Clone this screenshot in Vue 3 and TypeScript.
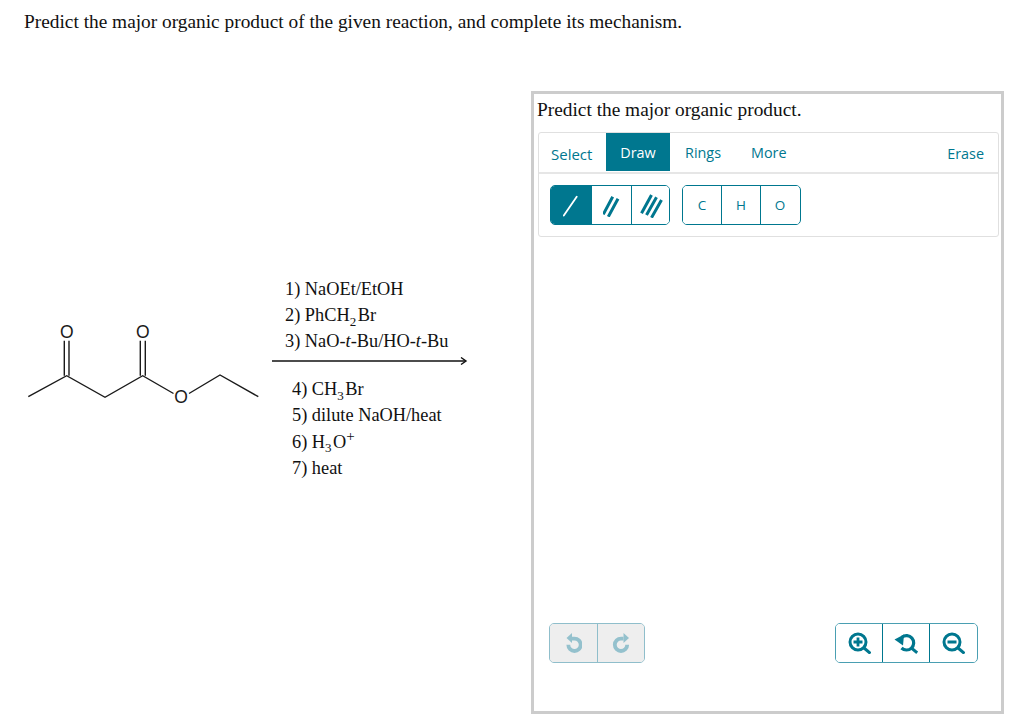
<script setup lang="ts">
const leftTabs = [
  { label: 'Select', cls: 'select' },
  { label: 'Draw', cls: 'draw' },
  { label: 'Rings', cls: 'rings' },
  { label: 'More', cls: 'more' },
]
const atoms = ['C', 'H', 'O']
</script>

<template>
  <div class="page">
    <h1 class="question">Predict the major organic product of the given reaction, and complete its mechanism.</h1>
    <div class="content">
      <section class="reaction">
        <svg class="molecule" width="250" height="110" viewBox="0 0 250 110">
          <g fill="none" stroke="#1a1a1a" stroke-width="1.4">
            <path d="M8.300 86.700 46.700 65.700 85 87.300 122.700 65.700 153.500 83.500" />
            <path d="M169 83.500 200 65 238.300 86.700" />
            <path d="M44.300 65.700V30.700M49 65.700V30.700M120.300 65.700V30.700M125.300 65.700V30.700" />
          </g>
          <g class="atom-label">
            <text x="46.700" y="27.500" text-anchor="middle">O</text>
            <text x="122.700" y="27.500" text-anchor="middle">O</text>
            <text x="161" y="92.500" text-anchor="middle">O</text>
          </g>
        </svg>
        <div class="conditions">
          <div class="above">
            <div>1) NaOEt/EtOH</div>
            <div>2) PhCH<sub>2</sub>Br</div>
            <div>3) NaO-<i>t</i>-Bu/HO-<i>t</i>-Bu</div>
          </div>
          <svg class="arrow" width="196" height="8" viewBox="0 0 196 8">
            <path d="M0 4H193" stroke="#111" stroke-width="1.500" fill="none" />
            <path d="M189 .5 194 4 189 7.500" stroke="#111" stroke-width="1.400" fill="none" />
          </svg>
          <div class="below">
            <div>4) CH<sub>3</sub>Br</div>
            <div>5) dilute NaOH/heat</div>
            <div>6) H<sub>3</sub>O<sup>+</sup></div>
            <div>7) heat</div>
          </div>
        </div>
      </section>

      <section class="panel">
        <h2 class="panel-title">Predict the major organic product.</h2>
        <div class="toolbar">
          <div class="tabs">
            <span v-for="tab in leftTabs" :key="tab.label" class="tab" :class="tab.cls">{{ tab.label }}</span>
            <span class="tab erase">Erase</span>
          </div>
          <div class="tools">
            <div class="btn-group bonds">
              <button class="tool active">
                <svg width="16" height="24" viewBox="0 0 16 24"><path d="M.8 22.500 13.700 3.700" stroke="#fff" stroke-width="1.800" stroke-linecap="round" /></svg>
              </button>
              <button class="tool">
                <svg width="18" height="24" viewBox="0 0 18 24"><path d="M.3 21.300 9.700 3.700M5.300 23.700 15 5.700" stroke="#00778f" stroke-width="3" /></svg>
              </button>
              <button class="tool">
                <svg width="24" height="26" viewBox="0 0 24 26"><path d="M1.500 21.300 11.500 3M6.500 23 16.500 5.300M11.500 25.700 21.500 8" stroke="#00778f" stroke-width="3" /></svg>
              </button>
            </div>
            <div class="btn-group atoms">
              <button v-for="a in atoms" :key="a" class="tool atom">{{ a }}</button>
            </div>
          </div>
        </div>
        <div class="footer">
          <div class="btn-group history">
            <button class="tool">
              <svg width="18" height="20" viewBox="0 0 18 20">
                <path d="M8 5.600H10.500A6.200 6.200 0 1 1 4.300 11.800" fill="none" stroke="#94c1cd" stroke-width="3.800" />
                <path d="M2.500 5 8 0V10Z" fill="#94c1cd" />
              </svg>
            </button>
            <button class="tool">
              <svg width="18" height="20" viewBox="0 0 18 20">
                <path d="M11.500 5.600H9A6.200 6.200 0 1 0 15.200 11.800" fill="none" stroke="#94c1cd" stroke-width="3.800" />
                <path d="M17 5 11.500 0V10Z" fill="#94c1cd" />
              </svg>
            </button>
          </div>
          <div class="btn-group zoom">
            <button class="tool">
              <svg width="24" height="22" viewBox="0 0 24 22">
                <circle cx="11" cy="10" r="8" fill="none" stroke="#00778f" stroke-width="3" />
                <path d="M16.500 15.500 23.500 21.500" stroke="#00778f" stroke-width="3" />
                <path d="M6.500 10H15.500M11 5.500V14.500" stroke="#00778f" stroke-width="2.800" />
              </svg>
            </button>
            <button class="tool">
              <svg width="24" height="22" viewBox="0 0 24 22">
                <path d="M8 5.200A7.200 7.200 0 1 1 7.500 16" fill="none" stroke="#00778f" stroke-width="3.200" />
                <path d="M.5 7.500 10 2.500 9 13.500Z" fill="#00778f" />
                <path d="M17.200 15.800 23.200 20.800" stroke="#00778f" stroke-width="3" />
              </svg>
            </button>
            <button class="tool">
              <svg width="24" height="22" viewBox="0 0 24 22">
                <circle cx="11" cy="10" r="8" fill="none" stroke="#00778f" stroke-width="3" />
                <path d="M16.500 15.500 23.500 21.500" stroke="#00778f" stroke-width="3" />
                <path d="M6.500 10H15.500" stroke="#00778f" stroke-width="2.800" />
              </svg>
            </button>
          </div>
        </div>
      </section>
    </div>
  </div>
</template>

<style>
html, body { margin: 0; background: #fff; }
</style>

<style scoped>
.page {
  width: 1024px;
  height: 715px;
  overflow: hidden;
  background: #fff;
  color: #111;
  font-family: "Liberation Serif", "Times New Roman", serif;
}
.question {
  margin: 0;
  height: 91px;
  box-sizing: border-box;
  padding: 11px 0 0 24px;
  font-size: 19.350px;
  line-height: 22px;
  font-weight: 400;
}
.content {
  display: flex;
}
.reaction {
  width: 531px;
  box-sizing: border-box;
  padding: 185px 0 0 20px;
  display: flex;
  align-items: flex-start;
}
.molecule {
  flex: none;
  margin-top: 34px;
}
.atom-label {
  font-family: "Liberation Sans", Arial, sans-serif;
  font-size: 17.500px;
  fill: #1a1a1a;
}
.conditions {
  margin-left: 2px;
  width: 196px;
  font-size: 18.330px;
  line-height: 26px;
}
.above { padding-left: 13px; }
.below { padding-left: 20px; margin-top: 11px; line-height: 26.400px; }
.arrow { display: block; margin-top: 3px; }
.conditions sub,
.conditions sup {
  font-size: 13px;
  line-height: 0;
  margin-right: 1.500px;
}
.conditions sup { font-size: 15px; margin-right: 0; }
.panel {
  width: 473px;
  height: 623px;
  box-sizing: border-box;
  border: 3px solid #ccc;
  display: flex;
  flex-direction: column;
}
.panel-title {
  margin: 0;
  padding: 4px 0 0 3px;
  font-size: 19.350px;
  line-height: 23px;
  font-weight: 400;
}
.toolbar {
  margin: 11px 0 0 4px;
  width: 461px;
  box-sizing: border-box;
  border: 1px solid #e0e0e0;
  border-radius: 3px;
  font-family: "Open Sans", "Noto Sans", sans-serif;
  color: #00778f;
}
.tabs {
  display: flex;
  height: 41px;
  box-sizing: border-box;
  border-bottom: 2px solid #e6e6e6;
  font-size: 14.400px;
}
.tab {
  display: flex;
  align-items: center;
  height: 38px;
}
.select { margin-left: 12px; width: 42px; padding-top: 3px; box-sizing: border-box; font-size: 15px; }
.draw {
  margin-left: 13px;
  width: 64px;
  justify-content: center;
  background: #00778f;
  color: #fff;
}
.rings { margin-left: 15px; }
.more { margin-left: 30px; }
.erase { margin-left: auto; margin-right: 14px; padding-top: 2px; box-sizing: border-box; }
.tools {
  height: 62px;
  box-sizing: border-box;
  padding: 11px 0 0 11px;
  display: flex;
  gap: 12px;
}
.btn-group {
  display: flex;
  height: 40px;
  box-sizing: border-box;
  border: 1px solid #00778f;
  border-radius: 5px;
  overflow: hidden;
}
.tool {
  display: flex;
  align-items: center;
  justify-content: center;
  padding: 0;
  margin: 0;
  border: 0;
  border-left: 1px solid #00778f;
  background: #fff;
  color: #00778f;
  height: 100%;
}
.tool:first-child { border-left: 0; }
.bonds { width: 120px; }
.bonds .tool { width: 40px; flex: none; }
.active { background: #00778f; }
.atoms { width: 119px; }
.atom {
  width: 39px;
  flex: none;
  font-family: "Open Sans", "Noto Sans", sans-serif;
  font-size: 13.500px;
}
.atom:first-child { width: 38px; }
.footer {
  margin-top: auto;
  margin-bottom: 48px;
  padding: 0 23px 0 15px;
  display: flex;
  justify-content: space-between;
}
.history {
  width: 96px;
  border-color: #8fbecb;
  background: #eee;
}
.history .tool {
  flex: 1;
  background: #eee;
  border-left-color: #8fbecb;
}
.zoom {
  width: 143px;
  border-color: #4a9fb2;
}
.zoom .tool { width: 47px; flex: none; }
.zoom .tool:first-child { width: 46px; }
</style>
